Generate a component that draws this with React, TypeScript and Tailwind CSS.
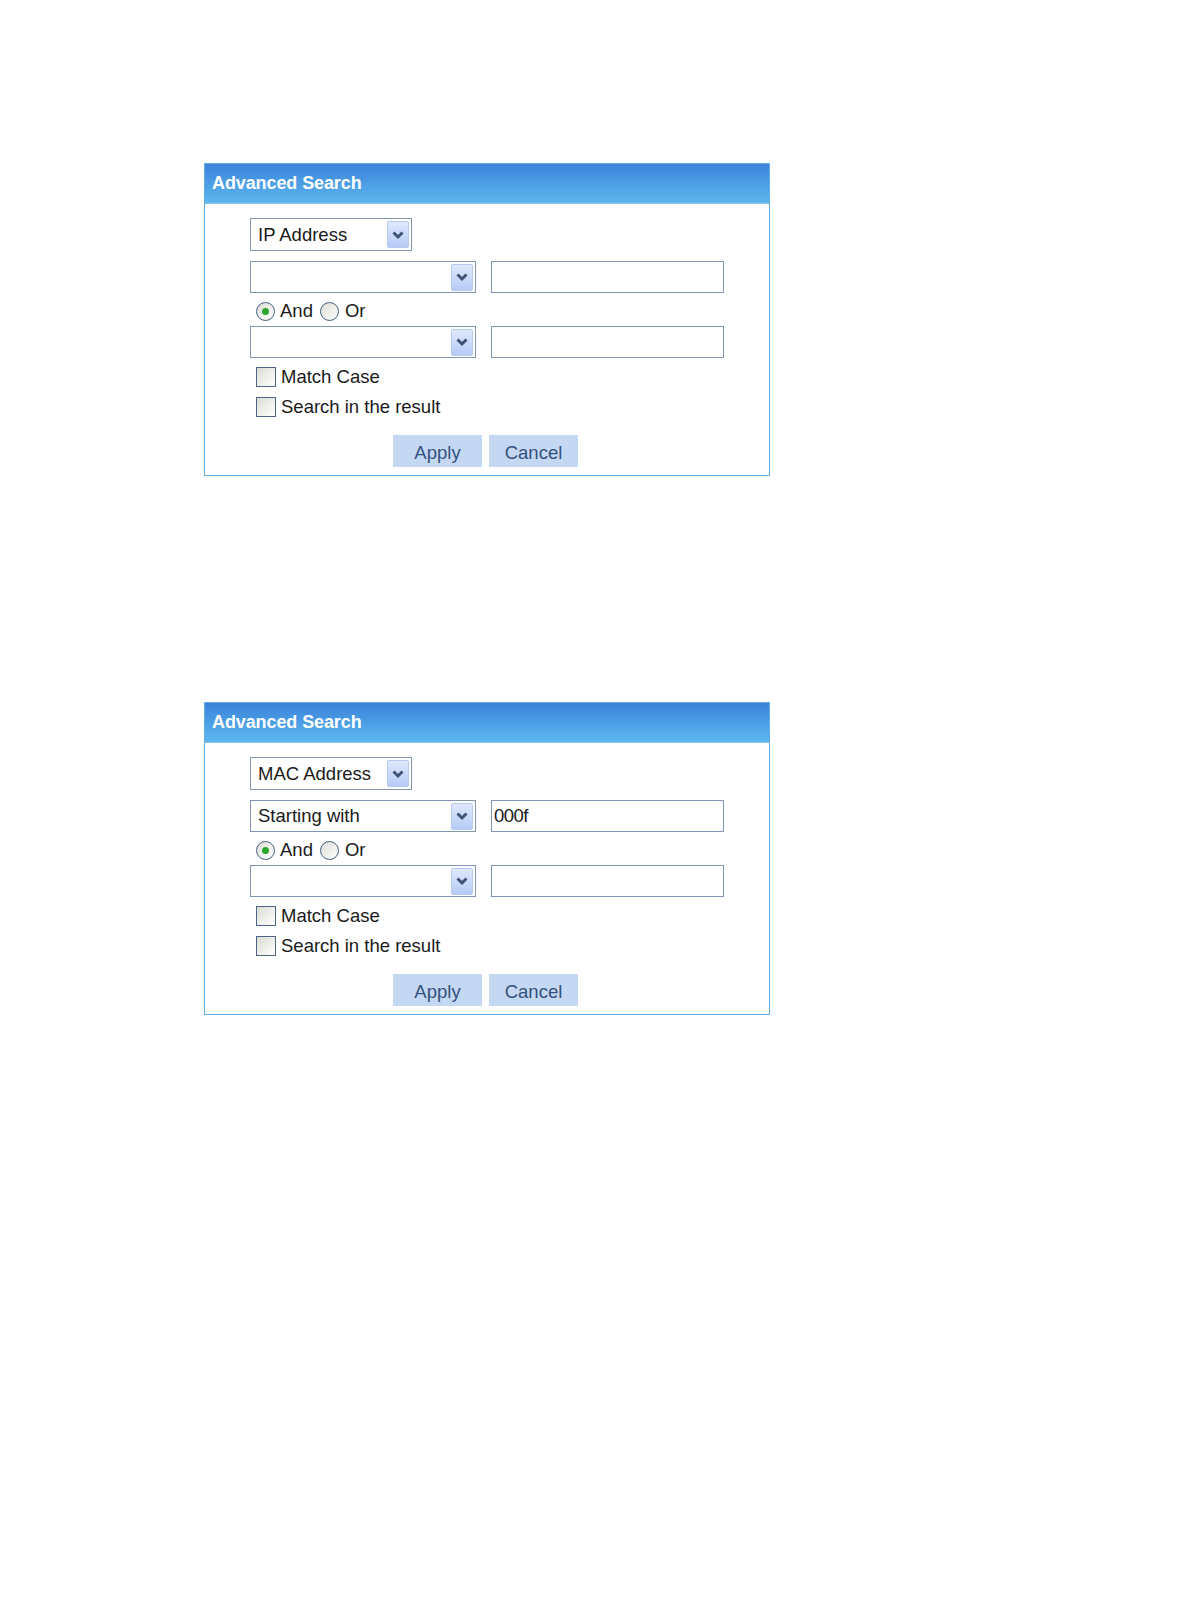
import { FunctionComponent } from "react";

const font = { fontFamily: '"Liberation Sans", Arial, sans-serif' };

const Chevron: FunctionComponent = () => (
	<svg width="14" height="10" viewBox="0 0 14 10">
		<path d="M2.5 2.5 L7 7 L11.5 2.5" fill="none" stroke="#3f5275" strokeWidth="3" />
	</svg>
);

interface SelectProps {
	value?: string;
	width: string;
	height?: string;
}

const Select: FunctionComponent<SelectProps> = ({ value, width, height }) => (
	<div
		className={`${width} ${height ?? "h-[32px]"} flex items-center border border-[#8196b4] bg-white pl-[7px] pr-[2px]`}
	>
		<span className="flex-grow text-[18.5px] text-[#1a1a1a] whitespace-nowrap overflow-hidden">
			{value ?? ""}
		</span>
		<span className="w-[22px] h-[27px] flex items-center justify-center rounded-[2px] border border-[#b7c9ee] bg-gradient-to-b from-[#dfe9fd] to-[#b6cbf6]">
			<Chevron />
		</span>
	</div>
);

const Radio: FunctionComponent<{ checked?: boolean }> = ({ checked }) => (
	<span className="w-[19px] h-[19px] rounded-full border-[1.5px] border-[#44607f] bg-gradient-to-br from-[#dcdcd6] to-white flex items-center justify-center">
		{checked ? <span className="w-[7px] h-[7px] rounded-full bg-[#2aa82a]" /> : null}
	</span>
);

const Checkbox: FunctionComponent<{ label: string }> = ({ label }) => (
	<div className="flex items-center h-[20px]">
		<span className="w-[20px] h-[20px] border border-[#4c6585] bg-gradient-to-br from-[#dcdcd6] to-white" />
		<span className="ml-[5px] text-[18.5px] text-[#1a1a1a]">{label}</span>
	</div>
);

interface PanelProps {
	field: string;
	condition?: string;
	term?: string;
}

const Panel: FunctionComponent<PanelProps> = ({ field, condition, term }) => (
	<div className="w-[566px] border border-[#62aee6] bg-white" style={font}>
		<div className="h-[40px] flex items-center pl-[7px] bg-gradient-to-b from-[#3b82da] to-[#5db8ee] border-b border-[#8cc6ef]">
			<span className="text-white font-bold text-[18px] tracking-[-0.1px]">Advanced Search</span>
		</div>
		<div className="pl-[45px] pb-[8px]">
			<div className="mt-[14px]">
				<Select value={field} width="w-[162px]" height="h-[33px]" />
			</div>
			<div className="mt-[10px] flex items-center">
				<Select value={condition} width="w-[226px]" />
				<div className="ml-[15px] w-[233px] h-[32px] border border-[#8196b4] bg-white flex items-center pl-[2px]">
					<span className="text-[18.5px] text-[#1a1a1a] tracking-[-0.5px]">{term ?? ""}</span>
				</div>
			</div>
			<div className="h-[33px] flex items-center pl-[6px] pt-[3px]">
				<Radio checked />
				<span className="ml-[5px] text-[18.5px] text-[#1a1a1a]">And</span>
				<span className="ml-[7px]">
					<Radio />
				</span>
				<span className="ml-[6px] text-[18.5px] text-[#1a1a1a]">Or</span>
			</div>
			<div className="flex items-center">
				<Select width="w-[226px]" />
				<div className="ml-[15px] w-[233px] h-[32px] border border-[#8196b4] bg-white" />
			</div>
			<div className="mt-[9px] pl-[6px]">
				<Checkbox label="Match Case" />
			</div>
			<div className="mt-[10px] pl-[6px]">
				<Checkbox label="Search in the result" />
			</div>
			<div className="mt-[18px] flex pl-[143px] gap-[7px]">
				<button
					type="button"
					className="w-[89px] h-[32px] bg-[#c5d8f3] text-[#34507e] text-[18.5px] pt-[3px]"
				>
					Apply
				</button>
				<button
					type="button"
					className="w-[89px] h-[32px] bg-[#c5d8f3] text-[#34507e] text-[18.5px] pt-[3px]"
				>
					Cancel
				</button>
			</div>
		</div>
	</div>
);

export default function App() {
	return (
		<div className="w-[1190px] h-[1616px] bg-white pl-[204px] pt-[163px]">
			<Panel field="IP Address" />
			<div className="mt-[226px]">
				<Panel field="MAC Address" condition="Starting with" term="000f" />
			</div>
		</div>
	);
}
